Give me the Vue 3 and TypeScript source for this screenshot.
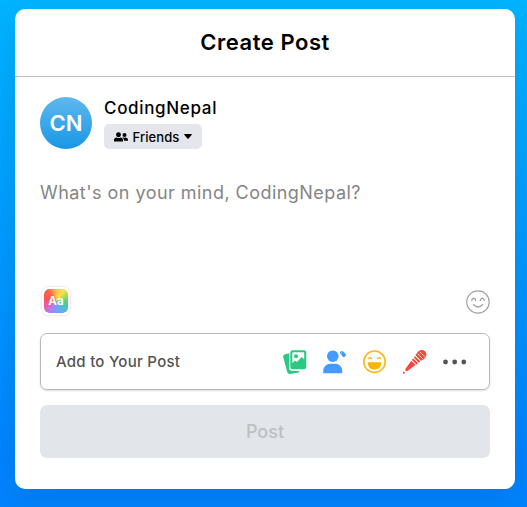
<script setup lang="ts">
interface PostAction {
  id: 'gallery' | 'tag' | 'emoji' | 'mic' | 'more'
  label: string
}

const userName = 'CodingNepal'
const initials = 'CN'
const actions: PostAction[] = [
  { id: 'gallery', label: 'Photo' },
  { id: 'tag', label: 'Tag people' },
  { id: 'emoji', label: 'Feeling' },
  { id: 'mic', label: 'Voice' },
  { id: 'more', label: 'More' },
]
</script>

<template>
  <main class="page">
    <section class="card">
      <header class="header"><h1 class="title">Create Post</h1></header>
      <div class="form">
        <div class="user">
          <div class="avatar"><span>{{ initials }}</span></div>
          <div class="details">
            <p class="name">{{ userName }}</p>
            <div class="privacy">
              <svg class="friends" viewBox="0 0 28 20">
                <circle cx="9" cy="5.5" r="4.9" />
                <path d="M0 19v-2.5C0 13 2.5 11 5.2 11c2.6 1.4 5 1.4 7.6 0 2.7 0 5.2 2 5.2 5.5V19z" />
                <circle cx="21" cy="6" r="4" />
                <path d="M16.4 11.4c1-.6 2-.6 2.8-.4 1.2.5 2.5.5 3.7 0 3 0 5.1 2 5.1 5v1.500h-7.800c.1-2.500-1.300-4.900-3.800-6.100z" />
              </svg>
              <span class="privacy-text">Friends</span>
              <svg class="caret" viewBox="0 0 8 5"><path d="M.7 0h6.600q.9 0 .4.800L4.600 4.500q-.6.600-1.200 0L.3.800Q-.2 0 .7 0z" /></svg>
            </div>
          </div>
        </div>
        <div class="prompt"><span>What's on your mind, {{ userName }}?</span></div>
        <div class="tools">
          <div class="theme"><span>Aa</span></div>
          <svg class="smile" viewBox="0 0 24 24" fill="none" stroke="#a1a1a1" stroke-linecap="round">
            <circle cx="12" cy="12" r="11.200" stroke-width="1.200" />
            <path d="M5.700 10.300q.5-2 2-2t2 2M14.300 10.300q.5-2 2-2t2 2M7.500 14.800q4.500 4.200 9 0" stroke-width="1.400" />
          </svg>
        </div>
        <div class="options">
          <p class="options-text">Add to Your Post</p>
          <ul class="list">
            <li v-for="action in actions" :key="action.id" :aria-label="action.label">
              <svg v-if="action.id === 'gallery'" class="icon" viewBox="0 0 24 24">
                <path d="M1.600 4.500 6 3.200V18q0 2.500 2.500 2.800l8 .1q-.2 1.500-1.800 1.900l-8 1.100q-2 .2-2.500-1.800L.2 7q-.4-2 1.400-2.500z" fill="#29c981" />
                <rect x="7.300" y=".2" width="16" height="19" rx="2.500" fill="#29c981" />
                <path d="M9.300 3.200q0-1 1-1h10q.9 0 .9 1v6.200l-2.600-2.500-4.700 5.200-2.100-1.700-2.500 2.800z" fill="#fff" />
                <circle cx="13" cy="6.200" r="2" fill="#29c981" />
              </svg>
              <svg v-else-if="action.id === 'tag'" class="icon" viewBox="0 0 24 24" fill="#4599ff">
                <circle cx="9.800" cy="6.200" r="5.800" />
                <path d="M.2 23.200V21c0-4.500 3.500-7.200 7.600-7.200h3.900c4.100 0 7.500 2.700 7.500 7.200v2.200z" />
                <path d="M17.500 1.300h2q.8 0 1.300.6l2 2.400q.5.700-.1 1.400l-1.300 1.300q-.7.600-1.300 0l-2.800-3.200q-.4-.5-.3-1.100z" />
                <circle cx="18.500" cy="2.900" r=".5" fill="#fff" />
              </svg>
              <svg v-else-if="action.id === 'emoji'" class="icon" viewBox="0 0 24 24" fill="none" stroke="#f7b91c">
                <circle cx="11.500" cy="11.700" r="10.700" stroke-width="1.700" />
                <path d="M5.200 9.200q.3-1.500 1.700-1.500t1.700 1.500M14.400 9.200q.3-1.500 1.700-1.500t1.700 1.500" stroke-width="1.400" />
                <path d="M4.800 12.200h13.400c0 4.700-2.500 7.300-6.700 7.300s-6.700-2.600-6.700-7.300z" fill="#f7b500" stroke="none" />
              </svg>
              <svg v-else-if="action.id === 'mic'" class="icon" viewBox="0 0 24 24" fill="#f9473c">
                <g transform="translate(.7 22.700) rotate(-45)">
                  <circle cx="0" cy="0" r="1.100" />
                  <path d="M2.800 0q0-1.200 1.300-1.500l9.700-1.500v6L4.100 1.500Q2.800 1.200 2.800 0z" />
                  <rect x="14.800" y="-3.300" width="2" height="6.600" rx=".5" />
                  <rect x="17.800" y="-3.700" width="2" height="7.400" rx=".5" />
                  <path d="M20.700-3.900q5.200-2 8.200.6 2.700 3.300 0 6.600-3 2.600-8.200.6z" />
                  <path d="M23.300-3.700v7.400M26.200-3.500v7" stroke="#fff" stroke-width=".7" />
                </g>
              </svg>
              <svg v-else class="icon" viewBox="0 0 24 24" fill="#545454">
                <circle cx="2.500" cy="12" r="2.400" /><circle cx="11.700" cy="12" r="2.400" /><circle cx="20.800" cy="12" r="2.400" />
              </svg>
            </li>
          </ul>
        </div>
        <button class="submit" type="button" disabled><span>Post</span></button>
      </div>
    </section>
  </main>
</template>

<style>
body { margin: 0; overflow: hidden; }
</style>

<style scoped>
.page { box-sizing: border-box; width: 527px; height: 507px; padding: 9px 12px 18px 15px; background: linear-gradient(#00b4ff, #0084ff 90%); font-family: Inter, "Liberation Sans", sans-serif; font-weight: 500; }
.card { box-sizing: border-box; width: 500px; height: 480px; background: #fff; border-radius: 10px; box-shadow: 0 12px 35px rgba(0, 0, 0, .1); }
.header { box-sizing: border-box; height: 68px; padding-bottom: 2px; display: flex; align-items: center; justify-content: center; border-bottom: 1px solid #bfbfbf; }
.title { margin: 0; font-size: 22px; line-height: 30px; font-weight: 600; letter-spacing: .55px; }
.form { padding: 20px 25px 31px; }
.user { display: flex; gap: 12px; height: 52px; }
.avatar { width: 52px; height: 52px; border-radius: 50%; background: linear-gradient(#5fb8ed, #1797e6); color: #fff; display: flex; align-items: center; justify-content: center; font-size: 22px; font-weight: 600; }
.details { display: flex; flex-direction: column; justify-content: space-between; }
.name { margin: 0; font-size: 17px; line-height: 22px; letter-spacing: .67px; white-space: nowrap; }
.privacy { box-sizing: border-box; width: 98px; height: 25px; padding: 0 10px; display: flex; align-items: center; justify-content: space-between; border-radius: 5px; background: #e4e6eb; font-size: 13px; }
.friends { width: 14px; height: 10px; }
.privacy-text { letter-spacing: .08px; }
.caret { width: 8px; height: 5px; }
.prompt { box-sizing: border-box; height: 138px; padding-top: 32px; color: #858585; font-size: 18px; line-height: 24px; font-weight: 400; letter-spacing: .46px; white-space: nowrap; }
.tools { display: flex; align-items: center; justify-content: space-between; height: 30px; padding-left: 2px; }
.theme { box-sizing: border-box; width: 28px; height: 28px; margin-bottom: 2px; border: 2px solid #fff; border-radius: 7px; background: conic-gradient(#ffc247, #ffe14d 35deg, #9de05b 65deg, #53ce7c 95deg, #43c4ca 130deg, #69a7f4 165deg, #b57cf0 215deg, #ee5a98 250deg, #fa5353 285deg, #ff6545 325deg, #ffc247) padding-box; box-shadow: 0 0 3px rgba(0, 0, 0, .18); display: flex; align-items: center; justify-content: center; color: #fff; font-size: 11.500px; line-height: 14px; font-weight: 700; }
.smile { width: 24px; height: 24px; }
.options { box-sizing: border-box; height: 57px; margin-top: 16px; padding: 0 22px 0 15px; display: flex; align-items: center; justify-content: space-between; border: 1px solid #b9b9b9; border-radius: 7px; box-shadow: 0 1px 2px rgba(0, 0, 0, .15); }
.options-text { margin: 0; color: #545454; font-size: 15px; letter-spacing: .27px; white-space: nowrap; }
.list { display: flex; gap: 16px; margin: 0; padding: 0; list-style: none; }
.list li, .icon { display: block; width: 24px; height: 24px; }
.submit { display: block; width: 450px; height: 53px; margin-top: 15px; padding: 0; border: 0; border-radius: 7px; background: #e2e5e9; color: #bcc0c4; font: 500 18px Inter, "Liberation Sans", sans-serif; }
</style>
